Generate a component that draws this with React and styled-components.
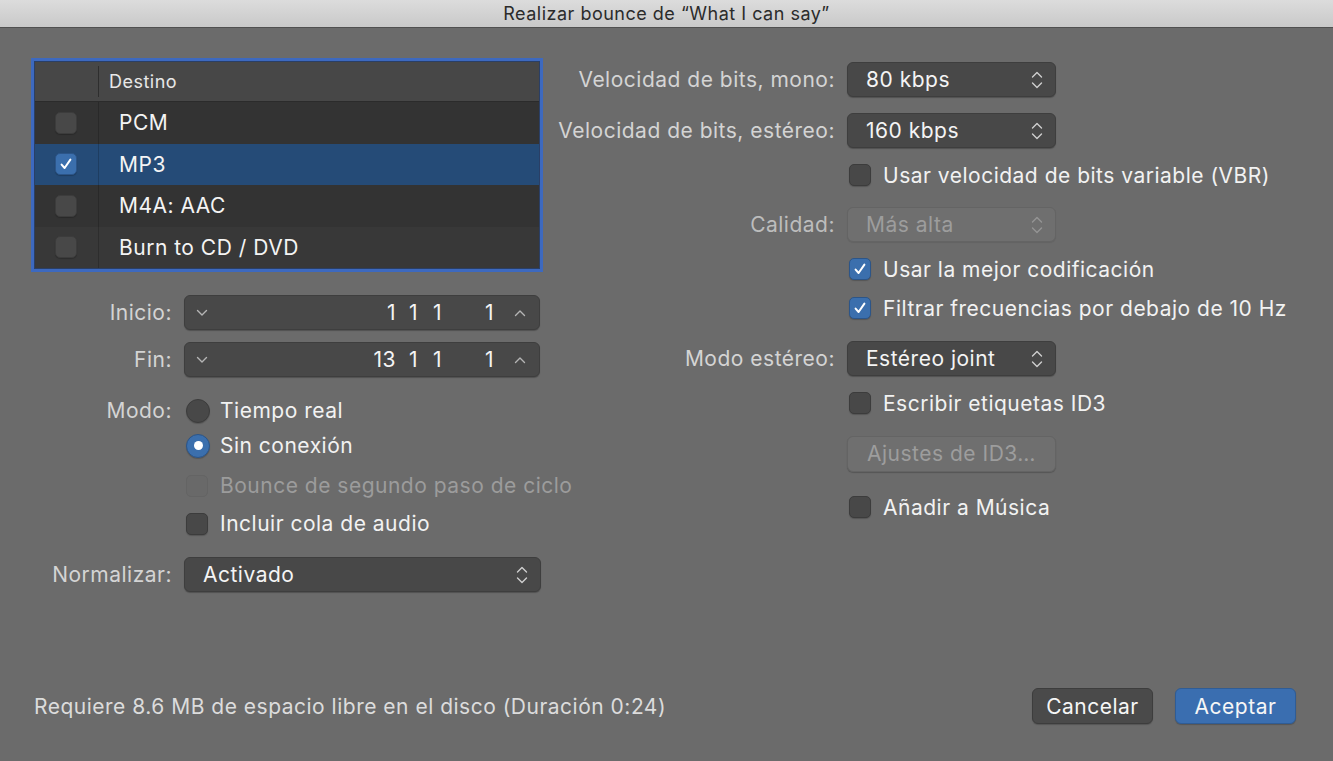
import React from 'react';
import styled, { createGlobalStyle } from 'styled-components';

const GlobalStyle = createGlobalStyle`
  html, body {
    margin: 0;
    padding: 0;
    background: #6b6b6b;
  }
  body {
    font-family: Inter, "Liberation Sans", sans-serif;
    -webkit-font-smoothing: antialiased;
  }
`;

const Window = styled.div`
  width: 1333px;
  height: 761px;
  display: flex;
  flex-direction: column;
  background: #6b6b6b;
  overflow: hidden;
`;

const TitleBar = styled.div`
  height: 27px;
  flex: none;
  display: flex;
  align-items: center;
  justify-content: center;
  background: linear-gradient(#dcdcdc, #c9c9c9);
  border-bottom: 1px solid #505050;
  color: #2b2b2b;
  font-size: 18px;
  letter-spacing: 0.5px;
`;

const Body = styled.div`
  display: flex;
  flex-direction: row;
  padding-left: 34px;
`;

const LeftPane = styled.div`
  width: 521px;
  flex: none;
  padding-top: 33px;
  display: flex;
  flex-direction: column;
`;

const RightPane = styled.div`
  padding-top: 34px;
  display: flex;
  flex-direction: column;
`;

const TableFrame = styled.div`
  width: 506px;
  box-sizing: border-box;
  border: 1px solid #2a3f66;
  box-shadow: 0 0 0 3px #3d69bf;
  display: flex;
  flex-direction: column;
`;

const TableRow = styled.div`
  display: flex;
  flex-direction: row;
  height: ${p => (p.$header ? 39 : 41.5)}px;
  background: ${p => p.$bg};
  border-bottom: ${p => (p.$header ? '1px solid #2b2b2b' : 'none')};
  color: ${p => (p.$header ? '#e8e8e8' : '#f4f4f4')};
  font-size: ${p => (p.$header ? 18 : 21)}px;
  letter-spacing: 0.5px;
`;

const CheckCell = styled.div`
  width: 64px;
  flex: none;
  display: flex;
  align-items: center;
  justify-content: center;
  padding-right: 2px;
  box-sizing: border-box;
  border-right: 1px solid ${p => (p.$header ? '#2e2e2e' : 'rgba(0,0,0,0.18)')};
  margin: ${p => (p.$header ? '4px 0' : '0')};
`;

const NameCell = styled.div`
  display: flex;
  align-items: center;
  padding-left: ${p => (p.$header ? 10 : 20)}px;
`;

const FormRow = styled.div`
  display: flex;
  flex-direction: row;
  align-items: center;
  height: ${p => p.$h || 35}px;
  margin-top: ${p => p.$mt || 0}px;
`;

const Label = styled.div`
  width: ${p => p.$w}px;
  flex: none;
  text-align: right;
  padding-right: 12px;
  box-sizing: border-box;
  color: ${p => (p.$dim ? '#bdbdbd' : '#d4d4d4')};
  font-size: 21px;
  letter-spacing: 0.5px;
  white-space: nowrap;
`;

const Field = styled.div`
  height: 35px;
  width: ${p => p.$w}px;
  flex: none;
  box-sizing: border-box;
  border-radius: 6px;
  background: ${p => (p.$disabled ? '#6f6f6f' : '#484848')};
  border: 1px solid ${p => (p.$disabled ? '#646464' : '#3e3e3e')};
  box-shadow: ${p => (p.$disabled ? '0 1px 1px rgba(0,0,0,0.08)' : '0 1px 1px rgba(0,0,0,0.25)')};
  display: flex;
  align-items: center;
  color: ${p => (p.$disabled ? '#9d9d9d' : '#f4f4f4')};
  font-size: 21px;
  letter-spacing: 0.5px;
`;

const PopupText = styled.span`
  flex: 1;
  padding-left: 18px;
  white-space: nowrap;
`;

const PopupArrows = styled.span`
  width: 36px;
  flex: none;
  display: flex;
  align-items: center;
  justify-content: center;
  color: ${p => (p.$disabled ? '#959595' : '#cfcfcf')};
`;

const StepArrow = styled.span`
  width: ${p => p.$w}px;
  flex: none;
  display: flex;
  align-items: center;
  justify-content: center;
  color: #b5b5b5;
`;

const StepValues = styled.span`
  flex: 1;
  display: flex;
  justify-content: flex-end;
  padding-right: 7px;
`;

const StepValue = styled.span`
  width: ${p => p.$w}px;
  text-align: right;
`;

const Option = styled.label`
  display: flex;
  align-items: center;
  gap: ${p => p.$gap || 12}px;
  margin-left: 2px;
  color: ${p => (p.$disabled ? '#9c9c9c' : '#f2f2f2')};
  font-size: 21px;
  letter-spacing: 0.5px;
  white-space: nowrap;
`;

const Box = styled.span`
  width: 22px;
  height: 22px;
  flex: none;
  box-sizing: border-box;
  border-radius: 5px;
  display: flex;
  align-items: center;
  justify-content: center;
  background: ${p => (p.$checked ? '#3b6fad' : p.$disabled ? '#696969' : '#484848')};
  border: 1px solid ${p => (p.$checked ? '#2c5588' : p.$disabled ? '#646464' : '#3c3c3c')};
  box-shadow: ${p => (p.$disabled ? 'none' : '0 1px 1px rgba(0,0,0,0.2)')};
`;

const Radio = styled.span`
  width: 24px;
  height: 24px;
  flex: none;
  box-sizing: border-box;
  border-radius: 50%;
  display: flex;
  align-items: center;
  justify-content: center;
  background: ${p => (p.$checked ? '#3b6fad' : '#484848')};
  border: 1px solid ${p => (p.$checked ? '#2c5588' : '#3c3c3c')};
  box-shadow: 0 1px 1px rgba(0,0,0,0.2);
`;

const Dot = styled.span`
  width: 9px;
  height: 9px;
  border-radius: 50%;
  background: #fff;
`;

const Indent = styled.div`
  width: ${p => p.$w}px;
  flex: none;
`;

const Button = styled.div`
  height: 36px;
  width: ${p => p.$w}px;
  flex: none;
  box-sizing: border-box;
  border-radius: 6px;
  display: flex;
  align-items: center;
  justify-content: center;
  font-size: 21px;
  letter-spacing: 0.5px;
  color: ${p => (p.$disabled ? '#9d9d9d' : '#f6f6f6')};
  background: ${p => (p.$primary ? '#3a6eb0' : p.$disabled ? '#6f6f6f' : '#4a4a4a')};
  border: 1px solid ${p => (p.$primary ? '#2f5c95' : p.$disabled ? '#646464' : '#3d3d3d')};
  box-shadow: 0 1px 1px rgba(0,0,0,0.2);
`;

const Footer = styled.div`
  margin-top: auto;
  display: flex;
  flex-direction: row;
  align-items: center;
  padding: 0 37px 37px 34px;
`;

const Note = styled.div`
  flex: 1;
  color: #dcdcdc;
  font-size: 21px;
  letter-spacing: 0.5px;
`;

const Buttons = styled.div`
  display: flex;
  gap: 22px;
`;

const Check = () => (
  <svg width="14" height="14" viewBox="0 0 14 14">
    <path d="M2.6 7.6 L5.6 11 L11.4 2.6" stroke="#fff" strokeWidth="2" fill="none" strokeLinecap="round" strokeLinejoin="round" />
  </svg>
);

const UpDown = () => (
  <svg width="12" height="22" viewBox="0 0 12 22">
    <path d="M1.5 8 L6 3.5 L10.5 8 M1.5 14 L6 18.5 L10.5 14" stroke="currentColor" strokeWidth="1.4" fill="none" strokeLinecap="round" strokeLinejoin="round" />
  </svg>
);

const Chevron = ({ up }) => (
  <svg width="12" height="8" viewBox="0 0 12 8">
    <path d={up ? 'M1.5 6.5 L6 2 L10.5 6.5' : 'M1.5 1.5 L6 6 L10.5 1.5'} stroke="currentColor" strokeWidth="1.4" fill="none" strokeLinecap="round" strokeLinejoin="round" />
  </svg>
);

const CheckBox = ({ checked, disabled, children }) => (
  <Option $disabled={disabled}>
    <Box $checked={checked} $disabled={disabled}>{checked && <Check />}</Box>
    {children}
  </Option>
);

const Popup = ({ value, disabled, width = 209 }) => (
  <Field $w={width} $disabled={disabled}>
    <PopupText>{value}</PopupText>
    <PopupArrows $disabled={disabled}><UpDown /></PopupArrows>
  </Field>
);

const Stepper = ({ bar }) => (
  <Field $w={356}>
    <StepArrow $w={34}><Chevron /></StepArrow>
    <StepValues>
      <StepValue $w={60}>{bar}</StepValue>
      <StepValue $w={22}>1</StepValue>
      <StepValue $w={24}>1</StepValue>
      <StepValue $w={52}>1</StepValue>
    </StepValues>
    <StepArrow $w={38}><Chevron up /></StepArrow>
  </Field>
);

const destinations = [
  { name: 'PCM', bg: '#333333' },
  { name: 'MP3', bg: '#254b77', checked: true },
  { name: 'M4A: AAC', bg: '#333333' },
  { name: 'Burn to CD / DVD', bg: '#383838' },
];

const LW = 150;
const RW = 292;

export default function App() {
  return (
    <Window>
      <GlobalStyle />
      <TitleBar>Realizar bounce de “What I can say”</TitleBar>
      <Body>
        <LeftPane>
          <TableFrame>
            <TableRow $header $bg="#474747">
              <CheckCell $header />
              <NameCell $header>Destino</NameCell>
            </TableRow>
            {destinations.map(d => (
              <TableRow key={d.name} $bg={d.bg}>
                <CheckCell><Box $checked={d.checked}>{d.checked && <Check />}</Box></CheckCell>
                <NameCell>{d.name}</NameCell>
              </TableRow>
            ))}
          </TableFrame>

          <FormRow $mt={26}>
            <Label $w={LW}>Inicio:</Label>
            <Stepper bar="1" />
          </FormRow>
          <FormRow $mt={12}>
            <Label $w={LW}>Fin:</Label>
            <Stepper bar="13" />
          </FormRow>
          <FormRow $mt={16}>
            <Label $w={LW}>Modo:</Label>
            <Option $gap={10}><Radio /> Tiempo real</Option>
          </FormRow>
          <FormRow>
            <Indent $w={LW} />
            <Option $gap={10}><Radio $checked><Dot /></Radio> Sin conexión</Option>
          </FormRow>
          <FormRow $mt={5}>
            <Indent $w={LW} />
            <CheckBox disabled>Bounce de segundo paso de ciclo</CheckBox>
          </FormRow>
          <FormRow $mt={3}>
            <Indent $w={LW} />
            <CheckBox>Incluir cola de audio</CheckBox>
          </FormRow>
          <FormRow $mt={16}>
            <Label $w={LW}>Normalizar:</Label>
            <Popup value="Activado" width={357} />
          </FormRow>
        </LeftPane>

        <RightPane>
          <FormRow>
            <Label $w={RW}>Velocidad de bits, mono:</Label>
            <Popup value="80 kbps" />
          </FormRow>
          <FormRow $mt={16}>
            <Label $w={RW}>Velocidad de bits, estéreo:</Label>
            <Popup value="160 kbps" />
          </FormRow>
          <FormRow $h={30} $mt={12}>
            <Indent $w={RW} />
            <CheckBox>Usar velocidad de bits variable (VBR)</CheckBox>
          </FormRow>
          <FormRow $mt={17}>
            <Label $w={RW} $dim>Calidad:</Label>
            <Popup value="Más alta" disabled />
          </FormRow>
          <FormRow $h={30} $mt={12}>
            <Indent $w={RW} />
            <CheckBox checked>Usar la mejor codificación</CheckBox>
          </FormRow>
          <FormRow $h={30} $mt={9}>
            <Indent $w={RW} />
            <CheckBox checked>Filtrar frecuencias por debajo de 10 Hz</CheckBox>
          </FormRow>
          <FormRow $mt={18}>
            <Label $w={RW}>Modo estéreo:</Label>
            <Popup value="Estéreo joint" />
          </FormRow>
          <FormRow $h={30} $mt={12}>
            <Indent $w={RW} />
            <CheckBox>Escribir etiquetas ID3</CheckBox>
          </FormRow>
          <FormRow $mt={18}>
            <Indent $w={RW} />
            <Button $w={209} $disabled>Ajustes de ID3…</Button>
          </FormRow>
          <FormRow $h={30} $mt={21}>
            <Indent $w={RW} />
            <CheckBox>Añadir a Música</CheckBox>
          </FormRow>
        </RightPane>
      </Body>

      <Footer>
        <Note>Requiere 8.6 MB de espacio libre en el disco (Duración 0:24)</Note>
        <Buttons>
          <Button $w={121}>Cancelar</Button>
          <Button $w={121} $primary>Aceptar</Button>
        </Buttons>
      </Footer>
    </Window>
  );
}
